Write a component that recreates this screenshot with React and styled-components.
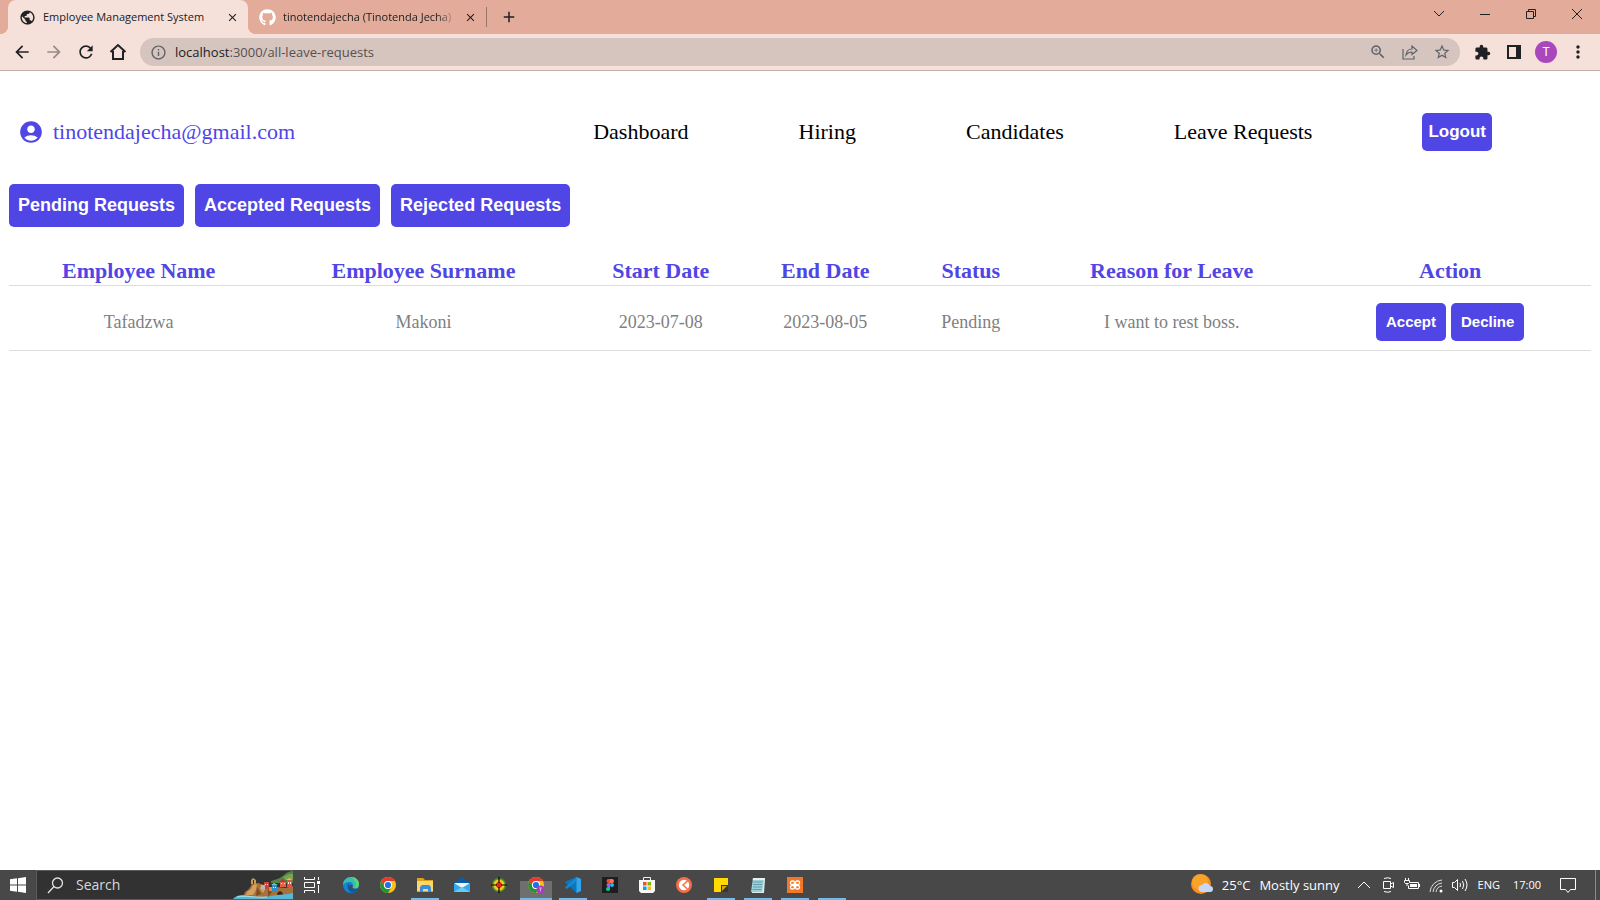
import React from "react";
import styled, { createGlobalStyle } from "styled-components";
import { MdAccountCircle, MdArrowBack, MdArrowForward, MdRefresh, MdInfoOutline, MdZoomIn, MdStarBorder, MdExtension, MdMoreVert, MdPublic, MdAdd, MdClose } from "react-icons/md";
import { FaGithub } from "react-icons/fa";

const ui = `"Open Sans", "Noto Sans", sans-serif`;
const brand = "#4f46e5";

const GlobalStyle = createGlobalStyle`
  * { box-sizing: border-box; }
  body { margin: 0; background: #fff; font-family: "Liberation Serif", "Times New Roman", serif; }
  button { font: inherit; color: inherit; border: 0; padding: 0; background: none; cursor: pointer; }
  a { color: inherit; text-decoration: none; }
  svg { display: block; flex: none; }
`;

const Screen = styled.div`
  min-height: 100vh;
  display: flex;
  flex-direction: column;
`;

/* browser frame */
const TabStrip = styled.div`
  height: 34px;
  padding-left: 8px;
  display: flex;
  background: #e3ab99;
  font: 11px/16px ${ui};
  color: #202124;
`;
const Tab = styled.div`
  position: relative;
  width: 240px;
  padding: 0 ${(p) => (p.$active ? 10 : 12)}px 0 11px;
  display: flex;
  align-items: center;
  gap: 7px;
  background: ${(p) => (p.$active ? "#f5e0da" : "transparent")};
  border-radius: 8px 8px 0 0;
  &::before, &::after {
    content: "";
    display: ${(p) => (p.$active ? "block" : "none")};
    position: absolute;
    bottom: 0;
    width: 8px;
    height: 8px;
  }
  &::before { left: -8px; background: radial-gradient(circle at 0 0, transparent 8px, #f5e0da 8px); }
  &::after { right: -8px; background: radial-gradient(circle at 100% 0, transparent 8px, #f5e0da 8px); }
`;
const TabTitle = styled.span`
  flex: 1;
  min-width: 0;
  overflow: hidden;
  white-space: nowrap;
  mask-image: ${(p) => (p.$fade ? "linear-gradient(to right, #000 88%, transparent)" : "none")};
`;
const IconButton = styled.button`
  width: ${(p) => p.$w || 32}px;
  flex: none;
  display: flex;
  align-items: center;
  justify-content: center;
  color: ${(p) => p.$color || "#202124"};
`;
const Divider = styled.span`
  width: 1px;
  height: 20px;
  align-self: center;
  background: #9b7468;
  margin-left: -2px;
`;
const WindowControls = styled.div`
  margin-left: auto;
  padding-bottom: 6px;
  display: flex;
  color: #000;
`;
const Toolbar = styled.div`
  height: 37px;
  padding: 0 6px;
  display: flex;
  align-items: center;
  background: #f5e0da;
  border-bottom: 1px solid #c0b1ad;
`;
const AddressBar = styled.div`
  flex: 1;
  height: 28px;
  margin: 0 6px;
  padding: 0 6px 0 10px;
  display: flex;
  align-items: center;
  gap: 8px;
  border-radius: 14px;
  background: #d6c5bf;
  color: #5f6368;
  font: 13px/20px ${ui};
`;
const Address = styled.span`
  flex: 1;
  color: #57504f;
  b { font-weight: 400; color: #202124; }
`;
const Avatar = styled.span`
  width: 22px;
  height: 22px;
  border-radius: 50%;
  background: #ab47bc;
  color: #fff;
  font: 12px/22px Roboto, sans-serif;
  text-align: center;
`;

/* page */
const Page = styled.main`
  flex: 1;
  padding: 0 9px;
`;
const Nav = styled.nav`
  margin-top: 42px;
  padding: 0 99px 0 9px;
  display: flex;
  align-items: center;
  gap: 110px;
  font-size: 22px;
  line-height: 26px;
  color: #000;
`;
const Account = styled.div`
  flex: 1;
  display: flex;
  align-items: center;
  gap: 9px;
  color: ${brand};
`;
const sizes = {
  nav: "height: 38px; padding: 0 6px; font-size: 17px; line-height: 20px;",
  filter: "height: 43px; padding: 0 9px 2px; font-size: 18px; line-height: 20px;",
  row: "height: 38px; padding: 0 10px; font-size: 15px; line-height: 20px;",
};
const PrimaryButton = styled.button`
  && {
    font-family: "Liberation Sans", Arial, sans-serif;
    font-weight: 700;
    ${(p) => sizes[p.$size]}
    color: #fff;
    background: ${brand};
    border-radius: 5px;
  }
`;
const Filters = styled.div`
  margin-top: 33px;
  display: flex;
  gap: 11px;
`;
const Table = styled.table`
  width: 100%;
  margin-top: 30px;
  border-collapse: collapse;
  table-layout: fixed;
  text-align: center;
`;
const Th = styled.th`
  width: ${(p) => p.$w};
  height: 28px;
  padding: 0;
  font-size: 22px;
  line-height: 26px;
  color: ${brand};
  border-bottom: 1px solid #ddd;
`;
const Td = styled.td`
  height: 65px;
  padding: 8px 0 0;
  font-size: 18px;
  line-height: 20px;
  color: #808080;
  border-bottom: 1px solid #ddd;
`;
const RowActions = styled.div`
  display: flex;
  justify-content: center;
  gap: 5px;
`;

/* desktop taskbar */
const Taskbar = styled.footer`
  height: 30px;
  display: flex;
  background: #484848;
  color: #fff;
  font: 13px/20px ${ui};
`;
const Search = styled.label`
  width: 257px;
  padding-left: 10px;
  display: flex;
  align-items: center;
  gap: 12px;
  background: #323232;
  border: 1px solid #5b5b5b;
  border-right: 0;
  overflow: hidden;
`;
const SearchInput = styled.input`
  flex: 1;
  min-width: 0;
  padding: 0;
  border: 0;
  outline: 0;
  background: none;
  font: 14px/20px ${ui};
  color: #d8d8d8;
  &::placeholder { color: #d8d8d8; opacity: 1; }
`;
const Pinned = styled.div`
  display: flex;
  margin-left: 2px;
`;
const AppButton = styled.button`
  width: 37px;
  display: flex;
  align-items: center;
  justify-content: center;
  background: ${(p) => (p.$current ? "linear-gradient(#6f6f6f, #6f6f6f) center bottom / 32px 19px no-repeat" : "none")};
  position: relative;
  &::after {
    content: "";
    display: ${(p) => (p.$open ? "block" : "none")};
    position: absolute;
    bottom: 0;
    left: ${(p) => (p.$current ? 3 : 5)}px;
    right: ${(p) => (p.$current ? 2 : 4)}px;
    height: 2px;
    background: #76b9ed;
  }
`;
const Tray = styled.div`
  margin-left: auto;
  display: flex;
  align-items: center;
`;
const Weather = styled.button`
  display: flex;
  align-items: center;
  gap: 9px;
  margin-right: 12px;
`;
const TrayText = styled.span`
  font-size: 11px;
  margin-left: ${(p) => p.$gap}px;
`;
const ShowDesktop = styled.button`
  width: 5px;
  height: 30px;
  && { border-left: 1px solid #8a8a8a; }
`;

const Svg = ({ s = 16, w, h, vb, children, ...rest }) => (
  <svg width={w || s} height={h || s} viewBox={vb || `0 0 ${w || s} ${h || s}`} fill="none" aria-hidden="true" {...rest}>{children}</svg>
);
const line = { stroke: "currentColor", strokeWidth: 1 };

const Chrome = ({ badge }) => (
  <Svg s={18}>
    <circle cx="9" cy="9" r="8" fill="#fbc116" />
    <path d="M2.1 5A8 8 0 0 1 15.9 5H9a4 4 0 0 0-3.5 6z" fill="#e33b2e" />
    <path d="M2.1 5A8 8 0 0 0 9 17l3.5-6A4 4 0 0 1 5.5 11z" fill="#229342" />
    <circle cx="9" cy="9" r="4" fill="#fff" />
    <circle cx="9" cy="9" r="3.1" fill="#1a73e8" />
    {badge && <><circle cx="13.5" cy="13.5" r="4" fill="#a63fbb" /><path d="M12 12h3M13.500 12v3.500" stroke="#d7a1e0" /></>}
  </Svg>
);
const Island = () => (
  <Svg w={60} h={28}>
    <path d="M38 10C44 8 48 7 51 4C54 1 57 0 60 0V12H38z" fill="#568247" />
    <path d="M50 6L56 3L60 3V8L52 9z" fill="#76a550" />
    <path d="M10 26L12 21L16 18L19 13L25 12L31 14L36 17L44 16L52 17L60 15V28H10z" fill="#a8713a" />
    <path d="M13 24L14 21L18 18L20 14L24 13L23 19L20 24zM28 14L33 17L30 22L27 18z" fill="#d3a05f" />
    <path d="M24 16l4 7-5 2zM35 18l4 3-4 5z" fill="#7b4c26" />
    <path d="M18 9l2-2 3 2v4h-5z" fill="#c79a55" /><path d="M20 9h1v4h-1z" fill="#4b321e" />
    <path d="M31 11h5v7h-5z" fill="#c9473a" /><path d="M28 14h4v4h-4z" fill="#b5b9b2" />
    <path d="M39 14h5v7h-5z" fill="#2d8fc8" /><path d="M38 14l3-2 4 2z" fill="#7dc3df" />
    <path d="M36 16h3v4h-3z" fill="#e08a3c" />
    <path d="M47 11h6v5h-6z" fill="#e2604d" /><path d="M46 11l4-3 4 3z" fill="#b13c30" />
    <path d="M54 9h5v7h-5z" fill="#e0524a" /><path d="M53 9l3-2 4 2z" fill="#efb74c" />
    <path d="M40 16h1v1h-1zM42 16h1v1h-1zM32 13h1v1h-1zM34 13h1v1h-1zM48 12h1v1h-1zM51 12h1v1h-1zM55 11h1v2h-1zM57 11h1v2h-1z" fill="#fff3cf" />
    <path d="M44 24c0-5 6-5 6 0z" fill="#3b2718" />
    <path d="M0 28C3 24 10 23 18 25C26 27 32 26 38 25C46 23 54 24 60 22V28z" fill="#57b8d6" />
    <path d="M4 26c8-2 19 1 30 0" stroke="#a3e2ed" />
  </Svg>
);

const TaskView = () => (
  <Svg s={18} {...line}>
    <path d="M1.500 1v2.500h10V1M1.500 17v-2.500h10V17M1.500 6.500h10v5h-10zM15.500 1v3M15.500 9v8" />
    <path d="M14 5h3v3h-3z" fill="#fff" stroke="none" />
  </Svg>
);

const apps = [
  ["Edge", <Svg s={18}>
    <circle cx="9" cy="9" r="8" fill="#1683d4" />
    <path d="M1 9C1 4 5 1 9 1c5 0 8 3.500 8 7 0 3-2 4.500-4.500 4.500-2 0-3-.7-2-1.800C12 8 10 6 7 6 4 6 2 7.500 1 9z" fill="#35c1b1" />
    <path d="M9 1c5 0 8 3.500 8 7 0 3-2 4.500-4.500 4.500 3-3 1-9-3.500-11.500z" fill="#63d36a" />
    <path d="M7 7c-3 3-1 9 4 9.700A8 8 0 0 0 16 13c-4 2-9 0-9-6z" fill="#0c59a4" />
    <path d="M8 9c-1 3 2 5 5 5 1.500 0 2.500-.4 3.200-.9l-.6-.6c-3 .8-6 0-5-2 .7-1.200-1-2.500-2.600-1.500z" fill="#484848" />
  </Svg>],
  ["Chrome", <Chrome />],
  ["File Explorer", <Svg s={18}><path d="M1 2h6l2 2h8v12H1z" fill="#e0a21a" /><path d="M1 5h16v10H1z" fill="#fcd769" /><path d="M4 16v-5l2-2h7l2 2v5h-3v-3H7v3z" fill="#3a8ee0" /></Svg>, 1],
  ["Mail", <Svg s={18}><path d="M1 7l8-6 8 6v9H1z" fill="#0b5ba7" /><path d="M2 7h14v8H2z" fill="#e9f5fd" /><path d="M1 7l8 5 8-5v9H1z" fill="#36a9ea" /><path d="M1 16l8-5 8 5z" fill="#67cbf5" /></Svg>],
  ["Color picker", <Svg s={18}><circle cx="9" cy="9" r="7" fill="#4f9c28" /><circle cx="9" cy="9" r="5.500" fill="#ffc91f" /><circle cx="9" cy="9" r="3" fill="#dc2a16" /><path d="M9 1v6M9 11v6M1 9h6M11 9h6" stroke="#000" strokeWidth="1.200" /></Svg>],
  ["Chrome window", <Chrome badge />, 1, 1],
  ["VS Code", <Svg s={18}><path d="M12.500 1L17 3v12l-4.500 2L1 6.500 2.500 5z" fill="#0a76bd" /><path d="M12.500 1v4.500l-10 7.500L1 11.500z" fill="#1688d2" /><path d="M12.500 1L17 3v12l-4.500 2z" fill="#35a4ec" /></Svg>, 1],
  ["Figma", <Svg s={18}><path d="M1 1h16v16H1z" fill="#1e1e1e" /><path d="M9 3H7.500a2 2 0 0 0 0 4H9z" fill="#f24e1e" /><path d="M9 3h2a2 2 0 0 1 0 4H9z" fill="#ff7262" /><path d="M9 7H7.500a2 2 0 0 0 0 4H9z" fill="#a259ff" /><circle cx="11" cy="9" r="2" fill="#1abcfe" /><path d="M9 11H7.500a2 2 0 1 0 1.500 2z" fill="#0acf83" /></Svg>],
  ["Store", <Svg s={18}><path d="M5.500 5V1.500h7V5" stroke="#e8eff5" /><path d="M1 4h16v11l-2 2H3l-2-2z" fill="#f7f7f7" /><path d="M5 6h3.500v3.500H5z" fill="#f25022" /><path d="M9.500 6H13v3.500H9.500z" fill="#7fba00" /><path d="M5 10.500h3.500V14H5z" fill="#00a4ef" /><path d="M9.500 10.500H13V14H9.500z" fill="#ffb900" /></Svg>],
  ["Git client", <Svg s={18}><circle cx="9" cy="9" r="8" fill="#f07149" /><circle cx="9" cy="9" r="5.200" fill="#fff" /><path d="M12.500 5L8 9l4.500 4" stroke="#f07149" strokeWidth="1.500" /></Svg>],
  ["Sticky Notes", <Svg s={18}><path d="M2 2h14v14H2z" fill="#ffd900" /><path d="M9 9h7v7H9z" fill="#373737" /><path d="M10 15v-5h5z" fill="#d4ab00" /></Svg>, 1],
  ["Notepad", <Svg s={18}><path d="M4 2h12l-2 14H2z" fill="#9bd1da" /><path d="M4 2h12l-.4 2H3.700z" fill="#e9f1f1" /><path d="M4.500 6h9M4.200 8.500h9M4 11h9M3.700 13.500h9" stroke="#679da7" /><path d="M16 3l-1 14H3v-1h10l2-13z" fill="#dfe8e8" /></Svg>, 1],
  ["XAMPP", <Svg s={18}><path d="M1 1h16v16H1z" fill="#f07828" /><rect x="4.500" y="5" width="4" height="3.500" rx="1.500" stroke="#fff" strokeWidth="1.300" /><rect x="9.500" y="5" width="4" height="3.500" rx="1.500" stroke="#fff" strokeWidth="1.300" /><rect x="4.500" y="9.500" width="4" height="3.500" rx="1.500" stroke="#fff" strokeWidth="1.300" /><rect x="9.500" y="9.500" width="4" height="3.500" rx="1.500" stroke="#fff" strokeWidth="1.300" /><path d="M8 9h2" stroke="#fff" strokeWidth="2" /></Svg>, 1],
  ["Blank window", null, 1],
];

const columns = [
  ["Employee Name", "16.4%"], ["Employee Surname", "19.6%"], ["Start Date", "10.4%"], ["End Date", "10.4%"],
  ["Status", "8%"], ["Reason for Leave", "17.4%"], ["Action", "17.8%"],
];
const requests = [["Tafadzwa", "Makoni", "2023-07-08", "2023-08-05", "Pending", "I want to rest boss."]];

export default function App() {
  return (
    <Screen>
      <GlobalStyle />
      <TabStrip>
        <Tab $active>
          <MdPublic size={17} />
          <TabTitle>Employee Management System</TabTitle>
          <IconButton $w={12} aria-label="Close tab"><MdClose size={13} /></IconButton>
        </Tab>
        <Tab>
          <FaGithub size={17} color="#fff" />
          <TabTitle $fade>tinotendajecha (Tinotenda Jecha)</TabTitle>
          <IconButton $w={12} aria-label="Close tab"><MdClose size={13} /></IconButton>
        </Tab>
        <Divider />
        <IconButton $w={44} aria-label="New tab"><MdAdd size={18} /></IconButton>
        <WindowControls>
          <IconButton $w={46} aria-label="Search tabs"><Svg s={12} {...line}><path d="M1 3l5 5 5-5" /></Svg></IconButton>
          <IconButton $w={46} aria-label="Minimize"><Svg s={10} {...line}><path d="M0 5.500h10" /></Svg></IconButton>
          <IconButton $w={46} aria-label="Restore"><Svg s={10} {...line}><path d="M.5 2.500h7v7h-7zM2.500 2.500v-2h7v7h-2" /></Svg></IconButton>
          <IconButton $w={46} aria-label="Close"><Svg s={10} {...line}><path d="M0 0l10 10M10 0L0 10" /></Svg></IconButton>
        </WindowControls>
      </TabStrip>
      <Toolbar>
        <IconButton aria-label="Back"><MdArrowBack size={20} /></IconButton>
        <IconButton aria-label="Forward" $color="#978b88"><MdArrowForward size={20} /></IconButton>
        <IconButton aria-label="Reload"><MdRefresh size={20} /></IconButton>
        <IconButton aria-label="Home"><Svg s={18} stroke="currentColor" strokeWidth="2"><path d="M1.500 9L9 2l7.500 7M4 8v8h10V8" /></Svg></IconButton>
        <AddressBar>
          <MdInfoOutline size={17} />
          <Address><b>localhost</b>:3000/all-leave-requests</Address>
          <IconButton $w={24} $color="#5f6368" aria-label="Zoom"><MdZoomIn size={18} /></IconButton>
          <IconButton $w={24} $color="#5f6368" aria-label="Share"><Svg s={16} stroke="currentColor" strokeWidth="1.200"><path d="M1 5v10h11v-3M4 11c.5-4 3-6 6-6V2l5 4.500-5 4V8c-2.500 0-4.500 1-6 3z" /></Svg></IconButton>
          <IconButton $w={24} $color="#5f6368" aria-label="Bookmark"><MdStarBorder size={18} /></IconButton>
        </AddressBar>
        <IconButton aria-label="Extensions"><MdExtension size={17} /></IconButton>
        <IconButton aria-label="Side panel"><Svg s={14}><path d="M1 1h12v12H1z" stroke="currentColor" strokeWidth="2" /><path d="M9 1h4v12H9z" fill="currentColor" /></Svg></IconButton>
        <IconButton aria-label="Profile"><Avatar>T</Avatar></IconButton>
        <IconButton aria-label="Menu"><MdMoreVert size={20} /></IconButton>
      </Toolbar>

      <Page>
        <Nav>
          <Account><MdAccountCircle size={26} /><span>tinotendajecha@gmail.com</span></Account>
          <a href="#dashboard">Dashboard</a>
          <a href="#hiring">Hiring</a>
          <a href="#candidates">Candidates</a>
          <a href="#leave">Leave Requests</a>
          <PrimaryButton $size="nav">Logout</PrimaryButton>
        </Nav>
        <Filters>
          {["Pending", "Accepted", "Rejected"].map((s) => (
            <PrimaryButton key={s} $size="filter">{s} Requests</PrimaryButton>
          ))}
        </Filters>
        <Table>
          <thead><tr>{columns.map(([name, w]) => <Th key={name} $w={w} scope="col">{name}</Th>)}</tr></thead>
          <tbody>
            {requests.map((r) => (
              <tr key={r[0]}>
                {r.map((v) => <Td key={v}>{v}</Td>)}
                <Td>
                  <RowActions>
                    <PrimaryButton $size="row">Accept</PrimaryButton>
                    <PrimaryButton $size="row">Decline</PrimaryButton>
                  </RowActions>
                </Td>
              </tr>
            ))}
          </tbody>
        </Table>
      </Page>

      <Taskbar>
        <IconButton $w={36} aria-label="Start"><Svg s={16}><path d="M0 2.300L7 1.300V7.500H0zM8 1.200L16 0v7.500H8zM0 8.500h7v6.200l-7-1zM8 8.500h8V16l-8-1.200z" fill="#fff" /></Svg></IconButton>
        <Search>
          <Svg s={17} stroke="#e4e4e4" strokeWidth="1.300"><circle cx="10.500" cy="6" r="5" /><path d="M7 9.500L1 16" /></Svg>
          <SearchInput placeholder="Search" aria-label="Search" />
          <Island />
        </Search>
        <AppButton aria-label="Task View"><TaskView /></AppButton>
        <Pinned>
          {apps.map(([name, icon, open, current]) => (
            <AppButton key={name} aria-label={name} $open={open} $current={current}>{icon}</AppButton>
          ))}
        </Pinned>
        <Tray>
          <Weather>
            <Svg s={22}><circle cx="10" cy="10" r="10" fill="#f78f1e" /><circle cx="9" cy="8" r="8" fill="#fbb034" opacity=".6" /><path d="M11 18a3.500 3.500 0 0 1 0-7 4.500 4.500 0 0 1 8 1 3 3 0 0 1 0 6z" fill="#c5d9f7" /></Svg>
            <span>25°C</span><span>Mostly sunny</span>
          </Weather>
          <IconButton $w={24} $color="#fff" aria-label="Hidden icons"><Svg s={14} {...line}><path d="M1 10l6-6 6 6" /></Svg></IconButton>
          <IconButton $w={24} $color="#fff" aria-label="Meet now"><Svg s={16} {...line}><path d="M3.500 4.500h7v7h-7zM10.500 7l3-1.500v5l-3-1.500M4 1.500q4-1.500 7 0M4 14.500q4 1.500 7 0" /></Svg></IconButton>
          <IconButton $w={24} $color="#fff" aria-label="Battery"><Svg s={16} {...line}><path d="M6 5.500h8.500v6h-10v-3M15.500 7v3M1.500 1v2M4.500 1v2M.5 3.500h5v2l-1 1h-3l-1-1zM3 7v2" /><path d="M6 7h7v3H6z" fill="#fff" stroke="none" /></Svg></IconButton>
          <IconButton $w={24} $color="#ddd" aria-label="Network"><Svg s={16} {...line}><path d="M2 15A13 13 0 0 1 14 3M5 15A10 10 0 0 1 14 6M8 15a7 7 0 0 1 6-6" /><circle cx="13" cy="14" r="1.500" fill="#fff" stroke="none" /></Svg></IconButton>
          <IconButton $w={24} $color="#fff" aria-label="Volume"><Svg s={18} {...line}><path d="M1.500 6.500h2l3-3v11l-3-3h-2zM9 7q1 2 0 4M11.500 5q2.500 4 0 8M14 3q4 6 0 12" /></Svg></IconButton>
          <TrayText $gap={6}>ENG</TrayText>
          <TrayText $gap={13}>17:00</TrayText>
          <IconButton $w={54} $color="#fff" aria-label="Notifications"><Svg s={18} {...line}><path d="M1.500 2.500h15v11h-5l-2.500 3-2.500-3h-5z" /></Svg></IconButton>
          <ShowDesktop aria-label="Show desktop" />
        </Tray>
      </Taskbar>
    </Screen>
  );
}
